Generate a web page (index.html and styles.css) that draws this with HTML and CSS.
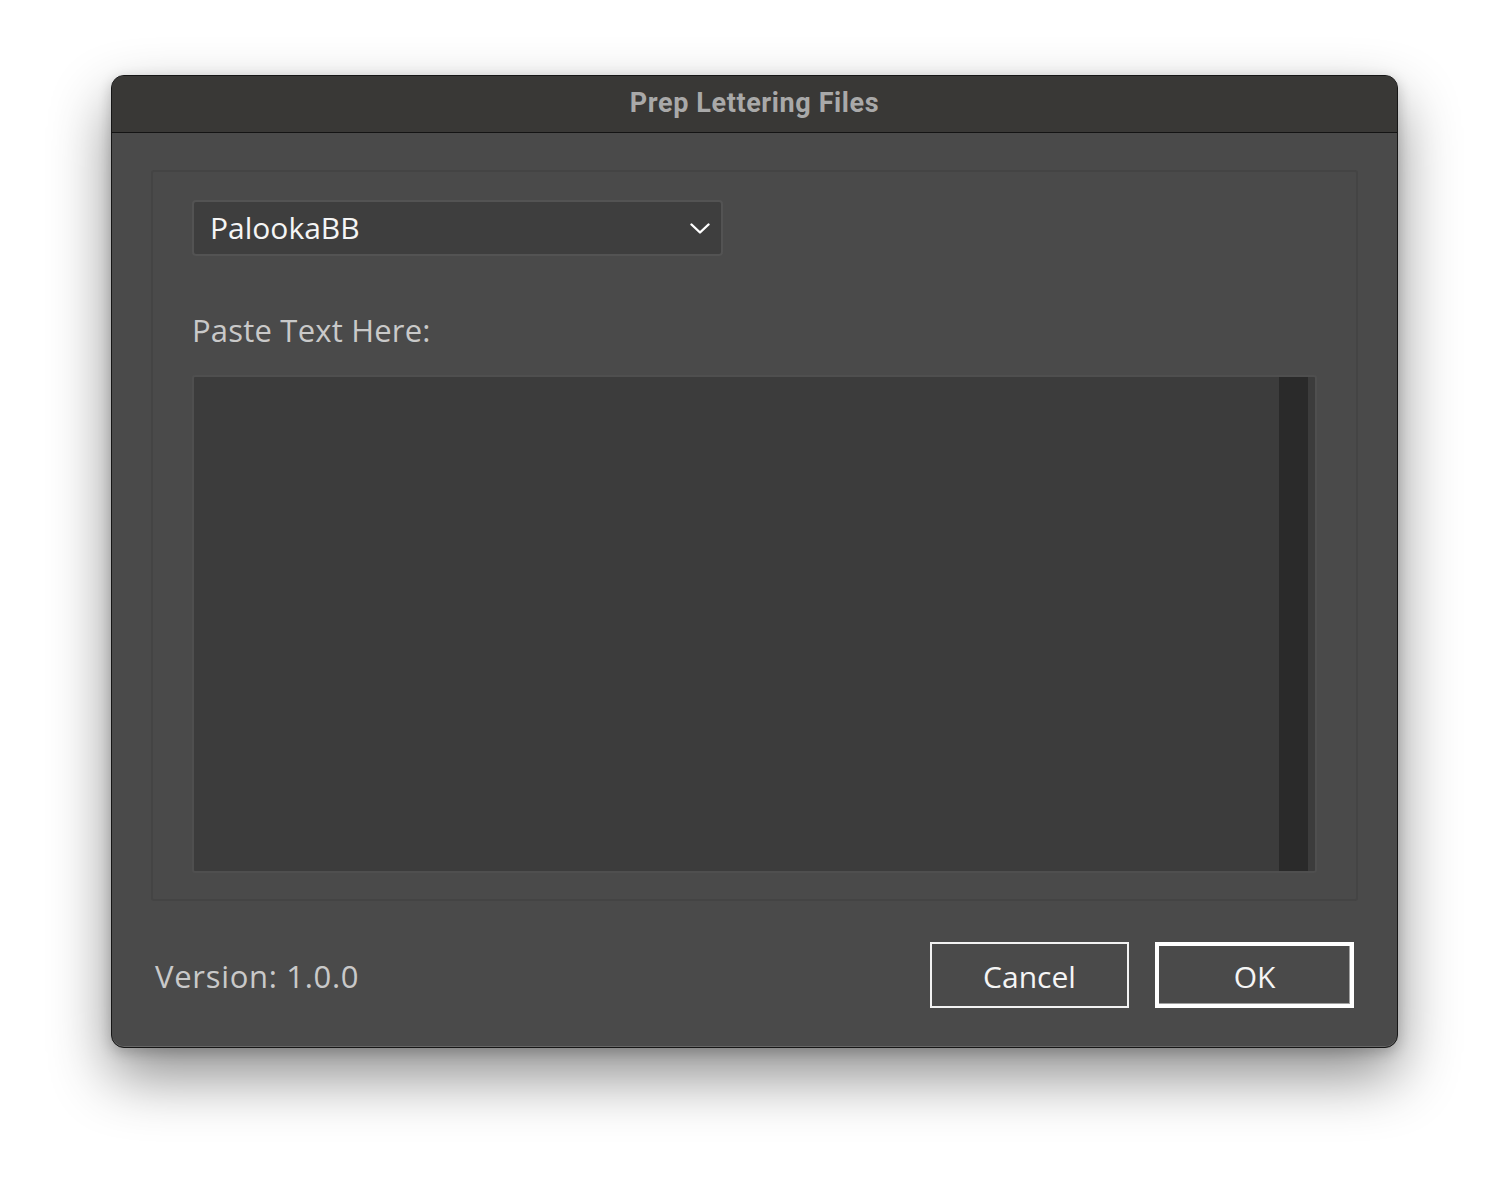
FILE: index.html
```html
<!DOCTYPE html>
<html>
<head>
<meta charset="utf-8">
<title>Prep Lettering Files</title>
<link rel="stylesheet" href="styles.css">
</head>
<body>
<div class="window">
  <div class="titlebar">Prep Lettering Files</div>
  <div class="content">
    <div class="panel">
      <div class="select">
        <span class="select-value">PalookaBB</span>
        <svg class="chevron" width="20" height="12" viewBox="0 0 20 12"><path d="M1.5 1.5 L10 9.5 L18.5 1.5" fill="none" stroke="#ffffff" stroke-width="2.4" stroke-linecap="round" stroke-linejoin="round"/></svg>
      </div>
      <div class="label">Paste Text Here:</div>
      <div class="textarea">
        <div class="text-space"></div>
        <div class="scrolltrack"></div>
      </div>
    </div>
    <div class="footer">
      <div class="version">Version: 1.0.0</div>
      <div class="buttons">
        <div class="btn">Cancel</div>
        <div class="btn btn-default">OK</div>
      </div>
    </div>
  </div>
</div>
</body>
</html>
```

FILE: styles.css
```css
html, body {
  margin: 0;
  padding: 0;
}
body {
  background: #ffffff;
  width: 1510px;
  height: 1196px;
  padding: 75px 0 0 111px;
  box-sizing: border-box;
  font-family: "Open Sans", "Noto Sans", sans-serif;
  overflow: hidden;
}
.window {
  width: 1287px;
  height: 973px;
  box-sizing: border-box;
  border: 1px solid #161616;
  border-radius: 13px;
  background: #4a4a4a;
  box-shadow: inset 0 -1px 0 #666666, 0 28px 60px rgba(0, 0, 0, 0.45), 0 4px 14px rgba(0, 0, 0, 0.2);
  overflow: hidden;
  display: flex;
  flex-direction: column;
}
.titlebar {
  height: 57px;
  flex: 0 0 auto;
  background: #393836;
  border-bottom: 1px solid #141414;
  color: #a9a9a9;
  font-family: Roboto, "Open Sans", sans-serif;
  font-weight: 700;
  font-size: 27px;
  letter-spacing: 0.6px;
  display: flex;
  align-items: center;
  justify-content: center;
  padding-bottom: 3px;
  box-sizing: border-box;
}
.content {
  flex: 1 1 auto;
  padding: 37px 39px 0 39px;
  display: flex;
  flex-direction: column;
}
.panel {
  height: 731px;
  flex: 0 0 auto;
  box-sizing: border-box;
  border: 2px solid #444444;
  border-radius: 3px;
  padding: 28px 39px 0 39px;
  display: flex;
  flex-direction: column;
}
.panel > * {
  flex-shrink: 0;
}
.select {
  width: 531px;
  height: 56px;
  box-sizing: border-box;
  border: 2px solid #535353;
  border-radius: 4px;
  background: #3e3e3e;
  display: flex;
  align-items: center;
  justify-content: space-between;
  padding: 0 11px 0 16px;
}
.select-value {
  color: #f5f5f5;
  font-size: 30px;
  line-height: 40px;
}
.chevron {
  display: block;
  margin-top: 2px;
}
.label {
  color: #c9c9c9;
  font-size: 31px;
  letter-spacing: 0.2px;
  line-height: 40px;
  margin-top: 54px;
}
.textarea {
  margin-top: 25px;
  width: 1125px;
  height: 498px;
  box-sizing: border-box;
  border: 2px solid #4f4f4f;
  border-radius: 3px;
  background: #3c3c3c;
  display: flex;
  padding-right: 7px;
}
.text-space {
  flex: 1 1 auto;
}
.scrolltrack {
  width: 29px;
  background: #2a2a2a;
}
.footer {
  display: flex;
  align-items: center;
  justify-content: space-between;
  padding: 0 4px 0 4px;
  margin-top: 41px;
  height: 66px;
}
.version {
  color: #c9c9c9;
  font-size: 31px;
  letter-spacing: 0.7px;
  line-height: 40px;
  padding-top: 2px;
}
.buttons {
  display: flex;
  gap: 26px;
}
.btn {
  width: 199px;
  height: 66px;
  box-sizing: border-box;
  border: 2px solid #f2f2f2;
  color: #f5f5f5;
  font-size: 30px;
  display: flex;
  align-items: center;
  justify-content: center;
  padding-top: 2px;
}
.btn-default {
  border: 4px solid #ffffff;
  box-shadow: inset -1px -1px 0 #a0a0a0;
}
```
